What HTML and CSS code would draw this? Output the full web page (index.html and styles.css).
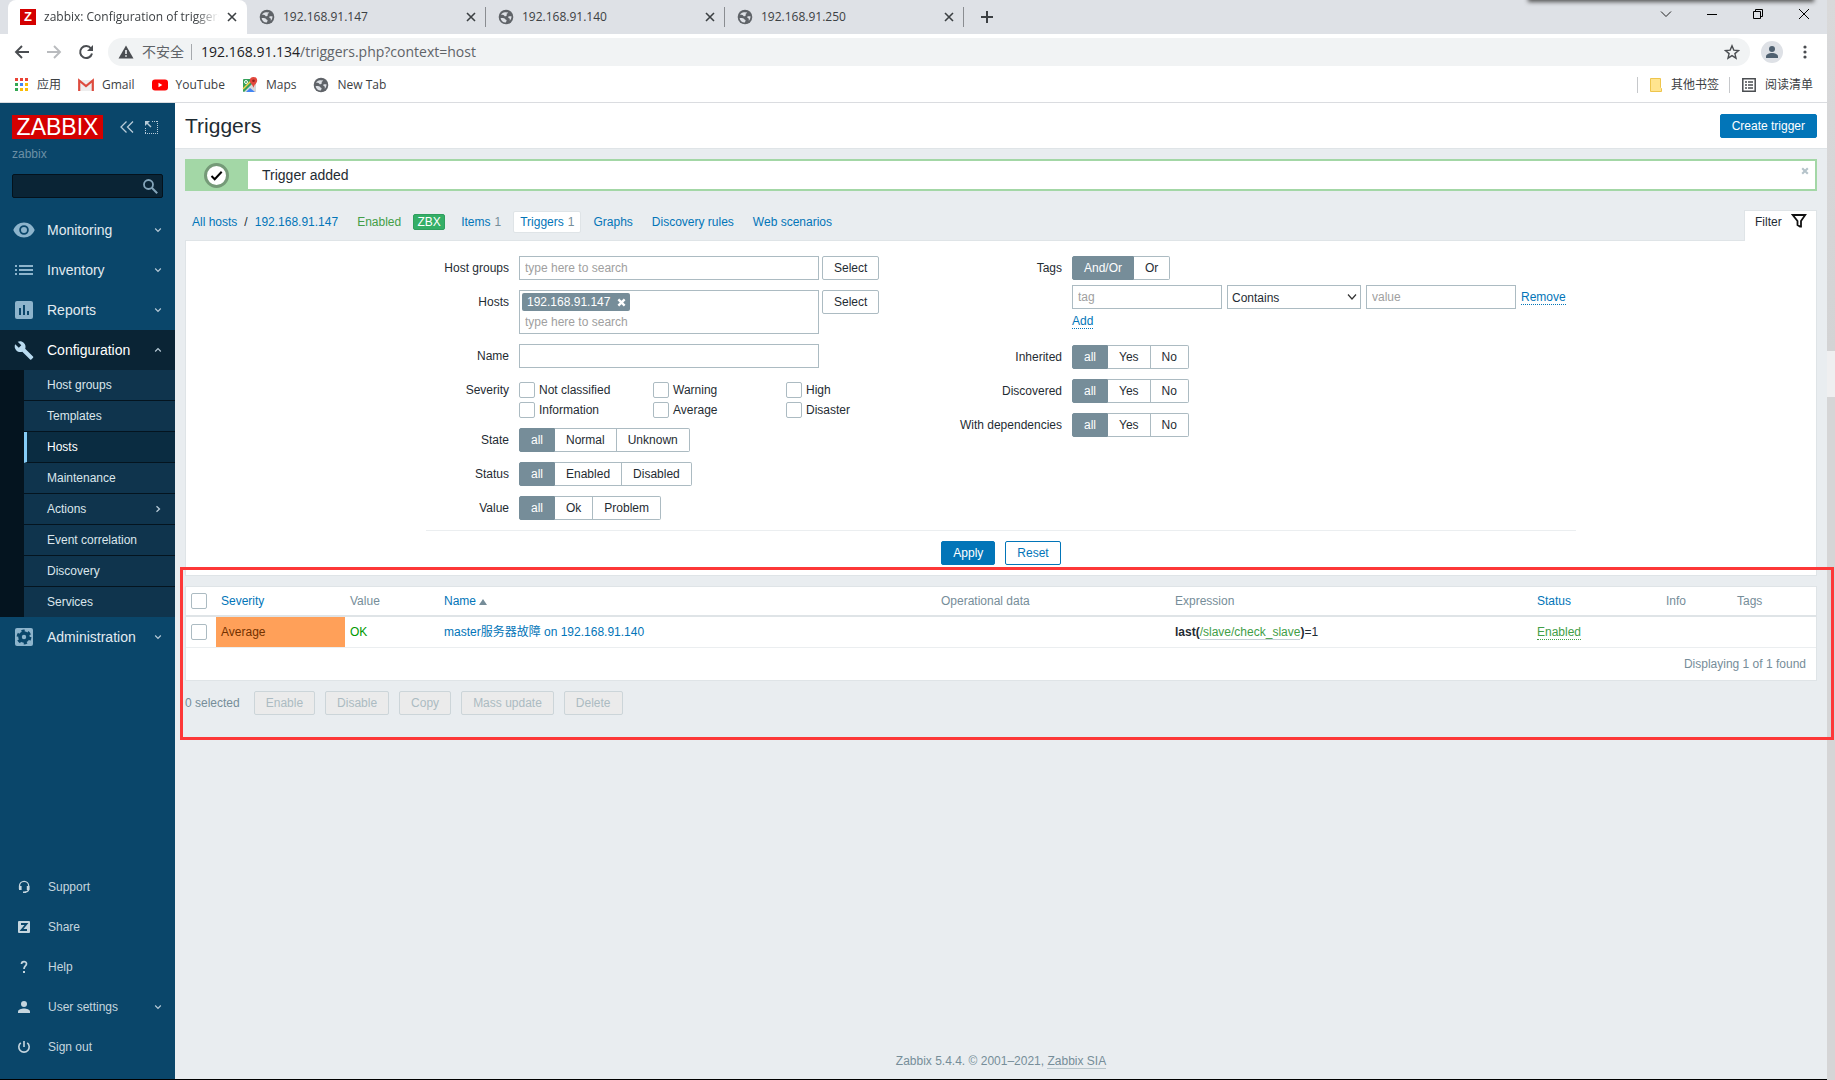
FILE: index.html
```html
<!DOCTYPE html>
<html lang="en">
<head>
<meta charset="utf-8">
<title>zabbix: Configuration of triggers</title>
<link rel="stylesheet" href="styles.css">
</head>
<body>
<svg class="defs" aria-hidden="true">
  <symbol id="i-globe" viewBox="0 0 16 16"><circle cx="8" cy="8" r="7.3" fill="#5f6368"/><path d="M7.500 3.200C5.500 3 4 4 3 5.800c1.500-.2 2.800 0 3.300 1 .5 1.100 2 .4 2.400-.3.300-.8-.3-1.300.2-1.900.4-.5 1-.4 1.300-1.200zM2.600 9c1.500-.3 4 0 4.500 1 .4.900 1.500.7 1.500 1.600 0 .8-.6 1.200-.8 2C5 13.700 2.900 11.600 2.600 9zM13.500 7.200c-1 .2-2.200-.3-3 .4-.8.800.2 1.500.8 1.700.7.300.6 1.300.4 2.400 1.200-1 1.900-2.700 1.800-4.500z" fill="#dee1e6"/></symbol>
  <symbol id="i-x" viewBox="0 0 10 10"><path d="M1 1l8 8M9 1L1 9" stroke="currentColor" stroke-width="1.600" fill="none"/></symbol>
  <symbol id="i-bold-x" viewBox="0 0 10 10"><path d="M1.500 1.500l7 7M8.500 1.500l-7 7" stroke="currentColor" stroke-width="2.600" fill="none"/></symbol>
  <symbol id="i-down" viewBox="0 0 8 8"><path d="M1.200 2.500L4 5.300l2.800-2.800" stroke="currentColor" stroke-width="1.200" fill="none"/></symbol>
  <symbol id="i-up" viewBox="0 0 8 8"><path d="M1.200 5.500L4 2.700l2.800 2.800" stroke="currentColor" stroke-width="1.200" fill="none"/></symbol>
  <symbol id="i-right" viewBox="0 0 8 8"><path d="M2.500 1.200L5.500 4l-3 2.800" stroke="currentColor" stroke-width="1.300" fill="none"/></symbol>
</svg>

<div class="window">
  <header class="browser">
    <div class="tabstrip">
      <div class="tab tab-active">
        <span class="fav-z">Z</span><span class="tab-title">zabbix: Configuration of triggers</span>
        <button class="plain" aria-label="Close tab"><svg width="10" height="10"><use href="#i-x"/></svg></button>
      </div>
      <div class="tab">
        <svg width="16" height="16"><use href="#i-globe"/></svg><span class="tab-title">192.168.91.147</span>
        <button class="plain" aria-label="Close tab"><svg width="10" height="10"><use href="#i-x"/></svg></button>
      </div>
      <div class="tab">
        <svg width="16" height="16"><use href="#i-globe"/></svg><span class="tab-title">192.168.91.140</span>
        <button class="plain" aria-label="Close tab"><svg width="10" height="10"><use href="#i-x"/></svg></button>
      </div>
      <div class="tab">
        <svg width="16" height="16"><use href="#i-globe"/></svg><span class="tab-title">192.168.91.250</span>
        <button class="plain" aria-label="Close tab"><svg width="10" height="10"><use href="#i-x"/></svg></button>
      </div>
      <button class="plain new-tab" aria-label="New tab"><svg width="12" height="12" viewBox="0 0 12 12"><path d="M6 0v12M0 6h12" stroke="#3c4043" stroke-width="2"/></svg></button>
      <div class="window-controls">
        <button class="plain" aria-label="Search tabs"><svg width="12" height="12" viewBox="0 0 12 12"><path d="M1 3.500l5 5 5-5" stroke="#222" fill="none"/></svg></button>
        <button class="plain" aria-label="Minimize"><svg width="12" height="12" viewBox="0 0 12 12"><path d="M1 6.500h10" stroke="#000"/></svg></button>
        <button class="plain" aria-label="Restore"><svg width="12" height="12" viewBox="0 0 12 12"><path d="M1.500 3.500h7v7h-7zM3.500 3.500v-2h7v7h-2" stroke="#000" fill="none"/></svg></button>
        <button class="plain" aria-label="Close"><svg width="12" height="12" viewBox="0 0 12 12"><path d="M1 1l10 10M11 1L1 11" stroke="#000" fill="none"/></svg></button>
      </div>
    </div>
    <div class="toolbar">
      <button class="plain" aria-label="Back"><svg width="16" height="16" viewBox="0 0 16 16"><path d="M15 8H2M8 2L2 8l6 6" stroke="#4a4d51" stroke-width="1.900" fill="none"/></svg></button>
      <button class="plain" aria-label="Forward"><svg width="16" height="16" viewBox="0 0 16 16"><path d="M1 8h13M8 2l6 6-6 6" stroke="#b9bbbe" stroke-width="1.900" fill="none"/></svg></button>
      <button class="plain" aria-label="Reload"><svg width="16" height="16" viewBox="0 0 16 16"><path d="M13 4.500A6 6 0 1 0 14 9.500" stroke="#4a4d51" stroke-width="2" fill="none"/><path d="M15 1v6H9z" fill="#4a4d51"/></svg></button>
      <div class="omnibox">
        <svg width="16" height="16" viewBox="0 0 16 16"><path d="M8 1.500L15.500 14.500H.5z" fill="#4a4d51"/><path d="M8 6v4M8 11.200v1.600" stroke="#f1f3f4" stroke-width="1.600"/></svg>
        <span class="unsafe">不安全</span>
        <span class="url">192.168.91.134<span>/triggers.php?context=host</span></span>
        <svg width="16" height="16" viewBox="0 0 16 16"><path d="M8 1.800l1.800 4.300 4.700.4-3.600 3.100 1.100 4.600L8 11.700l-4 2.500 1.100-4.600L1.500 6.500l4.700-.4z" stroke="#4a4d51" stroke-width="1.400" fill="none"/></svg>
      </div>
      <svg class="avatar" width="22" height="22" viewBox="0 0 22 22"><circle cx="11" cy="11" r="11" fill="#dee1e6"/><circle cx="11" cy="8" r="3" fill="#4f6070"/><path d="M5 17v-1.500c0-2 3-3.500 6-3.500s6 1.500 6 3.500V17z" fill="#4f6070"/></svg>
      <svg class="dots" width="4" height="14" viewBox="0 0 4 14"><circle cx="2" cy="2" r="1.600"/><circle cx="2" cy="7" r="1.600"/><circle cx="2" cy="12" r="1.600"/></svg>
    </div>
    <nav class="bookmarks">
      <a href="#"><svg width="14" height="14" viewBox="0 0 14 14"><path d="M0 0h3v3H0zM5 0h3v3H5zM10 0h3v3h-3z" fill="#ea4335"/><path d="M0 5h3v3H0zM0 10h3v3H0z" fill="#34a853"/><path d="M5 5h3v3H5z" fill="#4285f4"/><path d="M10 5h3v3h-3zM5 10h3v3H5zM10 10h3v3h-3z" fill="#fbbc04"/></svg>应用</a>
      <a href="#"><svg width="16" height="16" viewBox="0 0 16 16"><path d="M1 3h14v11H1z" fill="#eee"/><path d="M1.200 14V3.500L8 9l6.800-5.500V14" stroke="#dd4b3e" stroke-width="2.200" fill="none"/></svg>Gmail</a>
      <a href="#"><svg width="16" height="16" viewBox="0 0 16 16"><rect y="2.500" width="16" height="11" rx="3" fill="#f00"/><path d="M6.500 5.800v4.400L10.300 8z" fill="#fff"/></svg>YouTube</a>
      <a href="#"><svg width="16" height="16" viewBox="0 0 16 16"><rect x="1" y="2" width="13" height="13" rx="1" fill="#34a05a"/><path d="M2 15L12 5l2 2v8z" fill="#d8d8d8"/><path d="M4 15l4-4 5 4z" fill="#4285f4"/><path d="M1 12L11 2" stroke="#fbd14b" stroke-width="1.500"/><circle cx="4" cy="5" r="1.500" fill="none" stroke="#fff"/><path d="M11.500 0a3.700 3.700 0 0 1 3.700 3.700c0 2.300-2.600 3.300-3.700 7-1.100-3.700-3.700-4.700-3.700-7A3.700 3.700 0 0 1 11.500 0z" fill="#e2483d"/><circle cx="11.500" cy="3.700" r="1.300" fill="#8c2219"/></svg>Maps</a>
      <a href="#"><svg width="16" height="16"><use href="#i-globe"/></svg>New Tab</a>
      <span class="grow"></span>
      <a href="#" class="ruled"><svg width="14" height="16" viewBox="0 0 14 16"><path d="M1.500 1.500h10v9l1 1v3h-11z" fill="#ffe48f" stroke="#eec54c"/></svg>其他书签</a>
      <a href="#" class="ruled"><svg width="16" height="16" viewBox="0 0 16 16"><path d="M1.800 1.800h12.400v12.400H1.800z" fill="none" stroke="#4a4d51" stroke-width="1.500"/><path d="M4 5h2M7 5h5M4 8h2M7 8h5M4 11h2M7 11h5" stroke="#4a4d51" stroke-width="1.500"/></svg>阅读清单</a>
    </nav>
  </header>

  <div class="app">
    <aside class="sidebar">
      <div class="brand">
        <a class="logo" href="#">ZABBIX</a>
        <button class="plain" aria-label="Collapse sidebar"><svg width="14" height="12" viewBox="0 0 14 12"><path d="M6.500.5L1 6l5.500 5.500M13 .5L7.500 6l5.500 5.500" stroke="#b8cbd8" stroke-width="1.300" fill="none"/></svg></button>
        <button class="plain" aria-label="Hide sidebar"><svg width="13" height="13" viewBox="0 0 13 13"><path d="M7 .5h5.500M.5 7v5.500" stroke="#b8cbd8" stroke-dasharray="1 1" fill="none"/><path d="M12.500 0v13M0 12.500h13" stroke="#b8cbd8" stroke-dasharray="1 1" fill="none"/><path d="M6 6L2 2" stroke="#b8cbd8" stroke-width="1.500"/><path d="M0 0h5L0 5z" fill="#b8cbd8"/></svg></button>
      </div>
      <div class="server">zabbix</div>
      <form class="search">
        <input type="text" aria-label="Search">
        <button type="button" class="plain" aria-label="Search"><svg width="15" height="15" viewBox="0 0 15 15"><circle cx="5.500" cy="5.500" r="4.500" stroke="#84a5ba" stroke-width="1.800" fill="none"/><path d="M8.800 8.800l5.400 5.400" stroke="#84a5ba" stroke-width="2"/></svg></button>
      </form>
      <nav class="menu">
        <a href="#"><svg width="24" height="24" viewBox="0 0 24 24"><path d="M12 4.500C7 4.500 3 7.500 1.300 12c1.700 4.500 5.700 7.500 10.700 7.500s9-3 10.700-7.500C21 7.500 17 4.500 12 4.500zm0 12.300a4.800 4.800 0 1 1 0-9.600 4.800 4.800 0 0 1 0 9.600zm0-7.800a3 3 0 1 0 0 6 3 3 0 0 0 0-6z" fill="currentColor"/></svg><span>Monitoring</span><svg class="arrow" width="8" height="8"><use href="#i-down"/></svg></a>
        <a href="#"><svg width="24" height="24" viewBox="0 0 24 24"><path d="M3 8h2M3 12h2M3 16h2M7 8h14M7 12h14M7 16h14" stroke="currentColor" stroke-width="2"/></svg><span>Inventory</span><svg class="arrow" width="8" height="8"><use href="#i-down"/></svg></a>
        <a href="#"><svg width="24" height="24" viewBox="0 0 24 24"><rect x="3" y="3" width="18" height="18" rx="2" fill="currentColor"/><path d="M8 10v7M12 7v10M16 13v4" stroke="#0a466a" stroke-width="2"/></svg><span>Reports</span><svg class="arrow" width="8" height="8"><use href="#i-down"/></svg></a>
        <a href="#" class="open"><svg width="24" height="24" viewBox="0 0 24 24"><path d="M21 18.500l-7.800-7.700c.8-2 .3-4.300-1.300-5.900C10.200 3.200 7.700 2.900 5.700 3.800l3.600 3.500-2.500 2.500-3.600-3.500c-1 2-.5 4.500 1.200 6.200 1.600 1.600 3.900 2 5.900 1.200l7.800 7.800c.4.300.9.300 1.200 0l1.800-1.800c.3-.4.300-.9-.1-1.200z" fill="currentColor"/></svg><span>Configuration</span><svg class="arrow" width="8" height="8"><use href="#i-up"/></svg></a>
        <div class="submenu">
          <a href="#">Host groups</a>
          <a href="#">Templates</a>
          <a href="#" class="current">Hosts</a>
          <a href="#">Maintenance</a>
          <a href="#">Actions<svg class="arrow" width="8" height="8"><use href="#i-right"/></svg></a>
          <a href="#">Event correlation</a>
          <a href="#">Discovery</a>
          <a href="#">Services</a>
        </div>
        <a href="#"><svg width="24" height="24" viewBox="0 0 24 24"><rect x="3" y="3" width="18" height="18" rx="2" fill="currentColor"/><circle cx="12" cy="12" r="4" fill="none" stroke="#0a466a" stroke-width="3.600"/><circle cx="12" cy="12" r="6.200" fill="none" stroke="#0a466a" stroke-width="2.400" stroke-dasharray="3.250 3.240"/></svg><span>Administration</span><svg class="arrow" width="8" height="8"><use href="#i-down"/></svg></a>
      </nav>
      <nav class="menu menu-user">
        <a href="#"><svg width="24" height="24" viewBox="0 0 24 24"><path d="M7.500 14v-3a4.500 4.500 0 0 1 9.200 0v3c0 2-1.500 3-4.200 3.300" stroke="currentColor" stroke-width="1.300" fill="none"/><path d="M7 11h2.600v4H7zM14.800 11h2.600v4h-2.600zM11 16.500h3V18h-3z" fill="currentColor"/></svg><span>Support</span></a>
        <a href="#"><svg width="24" height="24" viewBox="0 0 24 24"><rect x="6" y="6" width="12" height="12" rx="1" fill="currentColor"/><path d="M9 9h5.500L9.500 15H15" stroke="#0a466a" stroke-width="1.800" fill="none"/></svg><span>Share</span></a>
        <a href="#"><svg width="24" height="24" viewBox="0 0 24 24"><path d="M9.500 9c0-3.200 5-3.200 5-.3 0 2.300-2.500 2.200-2.500 5.300" stroke="currentColor" stroke-width="1.700" fill="none"/><path d="M11 16h2v2h-2z" fill="currentColor"/></svg><span>Help</span></a>
        <a href="#"><svg width="24" height="24" viewBox="0 0 24 24"><circle cx="12" cy="9" r="3" fill="currentColor"/><path d="M6 18v-1.500c0-2 3.500-3 6-3s6 1 6 3V18z" fill="currentColor"/></svg><span>User settings</span><svg class="arrow" width="8" height="8"><use href="#i-down"/></svg></a>
        <a href="#"><svg width="24" height="24" viewBox="0 0 24 24"><path d="M8.800 7.800a5.200 5.200 0 1 0 6.400 0M12 6v6" stroke="currentColor" stroke-width="1.600" fill="none"/></svg><span>Sign out</span></a>
      </nav>
    </aside>

    <main>
      <div class="page-head"><h1>Triggers</h1><button class="btn btn-primary">Create trigger</button></div>
      <div class="content">
        <div class="message" role="status">
          <span class="message-icon"><svg width="25" height="25" viewBox="0 0 25 25"><circle cx="12.500" cy="12.500" r="11" fill="#fff" stroke="#759a78" stroke-width="3"/><path d="M7.500 13l3.200 3.200 7-7.500" stroke="#000" stroke-width="2" fill="none"/></svg></span>
          <span class="message-text">Trigger added</span>
          <button class="plain" aria-label="Close message"><svg width="8" height="8"><use href="#i-bold-x"/></svg></button>
        </div>

        <div class="filter-head">
          <nav class="crumbs">
            <a href="#">All hosts</a><span class="slash">/</span><a href="#">192.168.91.147</a>
            <span class="enabled">Enabled</span><span class="zbx">ZBX</span>
            <a class="link" href="#">Items<sup>1</sup></a>
            <a class="link selected" href="#">Triggers<sup>1</sup></a>
            <a class="link" href="#">Graphs</a>
            <a class="link" href="#">Discovery rules</a>
            <a class="link" href="#">Web scenarios</a>
          </nav>
          <a class="filter-tab" href="#">Filter<svg width="16" height="16" viewBox="0 0 16 16"><path d="M1.800 2h12.400L10 8v5.500H9L6.500 12V8z" stroke="#111" stroke-width="1.800" fill="none"/></svg></a>
        </div>

        <form class="filter">
          <div class="fields">
            <div class="grid grid-left">
              <label for="groups">Host groups</label>
              <div class="row"><input class="box" id="groups" type="text" placeholder="type here to search"><button type="button" class="btn">Select</button></div>
              <label for="hosts">Hosts</label>
              <div class="row">
                <div class="multi"><span class="chip">192.168.91.147<button type="button" class="plain" aria-label="Remove host"><svg width="9" height="9"><use href="#i-bold-x"/></svg></button></span><input id="hosts" type="text" placeholder="type here to search"></div>
                <button type="button" class="btn">Select</button>
              </div>
              <label for="name">Name</label>
              <div class="row"><input class="box" id="name" type="text"></div>
              <span>Severity</span>
              <div class="checks">
                <label><input type="checkbox">Not classified</label><label><input type="checkbox">Warning</label><label><input type="checkbox">High</label>
                <label><input type="checkbox">Information</label><label><input type="checkbox">Average</label><label><input type="checkbox">Disaster</label>
              </div>
              <span>State</span>
              <div class="seg"><label><input type="radio" name="state" checked>all</label><label><input type="radio" name="state">Normal</label><label><input type="radio" name="state">Unknown</label></div>
              <span>Status</span>
              <div class="seg"><label><input type="radio" name="status" checked>all</label><label><input type="radio" name="status">Enabled</label><label><input type="radio" name="status">Disabled</label></div>
              <span>Value</span>
              <div class="seg"><label><input type="radio" name="value" checked>all</label><label><input type="radio" name="value">Ok</label><label><input type="radio" name="value">Problem</label></div>
            </div>
            <div class="grid grid-right">
              <span>Tags</span>
              <div class="tags">
                <div class="seg"><label><input type="radio" name="evaltype" checked>And/Or</label><label><input type="radio" name="evaltype">Or</label></div>
                <div class="tag-row">
                  <input class="box" type="text" placeholder="tag" aria-label="Tag">
                  <span class="select"><select aria-label="Operator"><option>Contains</option></select><svg width="10" height="8" viewBox="0 0 10 8"><path d="M1 1.500l4 4.500 4-4.500" stroke="#333" stroke-width="1.200" fill="none"/></svg></span>
                  <input class="box" type="text" placeholder="value" aria-label="Value">
                  <a class="dotted" href="#">Remove</a>
                </div>
                <div class="add"><a class="dotted" href="#">Add</a></div>
              </div>
              <span>Inherited</span>
              <div class="seg"><label><input type="radio" name="inh" checked>all</label><label><input type="radio" name="inh">Yes</label><label><input type="radio" name="inh">No</label></div>
              <span>Discovered</span>
              <div class="seg"><label><input type="radio" name="disc" checked>all</label><label><input type="radio" name="disc">Yes</label><label><input type="radio" name="disc">No</label></div>
              <span>With dependencies</span>
              <div class="seg"><label><input type="radio" name="dep" checked>all</label><label><input type="radio" name="dep">Yes</label><label><input type="radio" name="dep">No</label></div>
            </div>
          </div>
          <div class="filter-actions"><button type="button" class="btn btn-primary">Apply</button><button type="button" class="btn btn-alt">Reset</button></div>
        </form>

        <section class="results">
          <div class="list">
            <table>
              <colgroup><col class="c-check"><col class="c-sev"><col class="c-val"><col><col class="c-op"><col class="c-expr"><col class="c-status"><col class="c-info"><col class="c-tags"></colgroup>
              <thead><tr><th><input type="checkbox" aria-label="Select all"></th><th><a href="#">Severity</a></th><th>Value</th><th><a href="#">Name<span class="sort"></span></a></th><th>Operational data</th><th>Expression</th><th><a href="#">Status</a></th><th>Info</th><th>Tags</th></tr></thead>
              <tbody><tr><td><input type="checkbox" aria-label="Select trigger"></td><td class="average">Average</td><td class="ok">OK</td><td><a href="#">master服务器故障 on 192.168.91.140</a></td><td></td><td><b>last(</b><a class="item" href="#">/slave/check_slave</a><b>)</b>=1</td><td><a class="dotted green" href="#">Enabled</a></td><td></td><td></td></tr></tbody>
            </table>
            <div class="stats">Displaying 1 of 1 found</div>
          </div>
          <div class="bulk"><span>0 selected</span><button class="btn" disabled>Enable</button><button class="btn" disabled>Disable</button><button class="btn" disabled>Copy</button><button class="btn" disabled>Mass update</button><button class="btn" disabled>Delete</button></div>
        </section>
      </div>
      <footer>Zabbix 5.4.4. © 2001–2021, <a href="#">Zabbix SIA</a></footer>
    </main>
  </div>
</div>
<div class="desktop"></div>
</body>
</html>
```

FILE: styles.css
```css
* { box-sizing: border-box; }

body {
  margin: 0;
  display: flex;
  min-height: 100vh;
  font: 12px/18px "Liberation Sans", "Noto Sans CJK SC", sans-serif;
  color: #1f2c33;
  background: #ebeef0;
}

a { color: #0275b8; text-decoration: none; }
svg { display: block; flex: none; }
input, select, button { font: inherit; color: inherit; margin: 0; }
.defs { position: absolute; width: 0; height: 0; }
.plain { display: flex; align-items: center; justify-content: center; padding: 0; border: 0; background: none; flex: none; }
.grow { flex: 1; }

.window { flex: 1; min-width: 0; display: flex; flex-direction: column; border-bottom: 1px solid #000; }
.desktop {
  width: 8px;
  background: linear-gradient(#d9d9da, #d3d3d4) 0 0 / 100% 351px no-repeat,
    linear-gradient(#efeff0, #efeff0) 0 351px / 100% 46px no-repeat, #d5d5d6;
}

/* Browser chrome */
.browser { background: #fff; border-bottom: 1px solid #dadce0; font-family: "Open Sans", "Noto Sans CJK SC", sans-serif; color: #3c4043; }
.tabstrip { position: relative; display: flex; height: 34px; padding-left: 8px; background: #dee1e6; }
.tabstrip::after { content: ""; position: absolute; top: -6px; right: 14px; width: 284px; height: 6px; box-shadow: 0 1px 4px 1px #555; }
.tab { position: relative; display: flex; align-items: center; width: 239px; height: 34px; padding: 0 10px 0 12px; gap: 8px; }
.tab-active { background: #fff; border-radius: 8px 8px 0 0; }
.tab:not(.tab-active)::after { content: ""; position: absolute; right: 0; top: 7px; width: 1px; height: 20px; background: #8a8d91; }
.tab-title { flex: 1; min-width: 0; overflow: hidden; white-space: nowrap; }
.tab-active .tab-title { -webkit-mask: linear-gradient(90deg, #000 86%, transparent); mask: linear-gradient(90deg, #000 86%, transparent); }
.fav-z { width: 16px; height: 16px; background: #d40000; color: #fff; font: bold 13px/16px "Liberation Sans", sans-serif; text-align: center; }
.new-tab { width: 46px; }
.window-controls { display: flex; height: 28px; margin-left: auto; }
.window-controls button { width: 46px; }

.toolbar { display: flex; align-items: center; height: 36px; padding: 0 20px 0 6px; }
.toolbar > button { width: 32px; height: 28px; }
.omnibox { display: flex; flex: 1; align-items: center; height: 28px; margin-left: 6px; padding: 0 10px; border-radius: 14px; background: #f1f3f4; font-size: 14px; }
.unsafe { margin: 0 7px 0 8px; color: #5f6368; }
.url { flex: 1; padding-left: 9px; border-left: 1px solid #a6a9ad; line-height: 16px; color: #202124; }
.url span { color: #5f6368; }
.avatar { margin: 0 20px 0 11px; }
.dots { fill: #4a4d51; }
.bookmarks { display: flex; align-items: center; height: 32px; padding: 0 14px 2px 15px; gap: 17px; }
.bookmarks a { display: flex; align-items: center; gap: 8px; color: #3c4043; }
.bookmarks .ruled { height: 16px; padding-left: 11px; border-left: 1px solid #c6c8cb; }
.bookmarks .ruled + .ruled { margin-left: -7px; }

/* Application */
.app { display: flex; flex: 1; }
.sidebar { display: flex; flex-direction: column; width: 175px; flex: none; padding-bottom: 12px; background: #0a466a; }
.brand { display: flex; align-items: center; gap: 11px; padding: 12px 17px 0 12px; }
.logo { width: 91px; height: 24px; margin-right: 6px; background: #d40000; color: #fff; font-size: 23px; line-height: 24px; text-align: center; }
.server { padding: 6px 12px 0; color: #6c90a6; }
.search { display: flex; height: 24px; margin: 11px 12px 12px; padding-right: 4px; border: 1px solid #04121c; border-radius: 2px; background: #0a2435; }
.search input { flex: 1; min-width: 0; border: 0; background: none; color: #fff; }
.menu a { display: flex; align-items: center; height: 40px; padding: 0 13px 0 12px; color: #e2ebf1; }
.menu > a { font-size: 14px; }
.menu > a > svg:first-child { color: #8db4cc; }
.menu span { flex: 1; padding-left: 11px; }
.menu .arrow { margin-left: auto; color: #b8cbd8; }
.menu .open { background: #0a2435; color: #fff; }
.menu .open > svg:first-child { color: #b9dbf0; }
.submenu { border-left: 24px solid #04141f; background: #0f344d; }
.submenu a { height: 31px; padding-left: 23px; border-bottom: 1px solid #04141f; color: #dbe6ec; }
.submenu a:last-child { height: 30px; border-bottom: 0; }
.submenu .current { padding-left: 20px; border-left: 3px solid #85cdf7; background: #0a2c41; color: #fff; }
.menu-user { margin-top: auto; }
.menu-user > a { font-size: 12px; color: #c6d6df; }
.menu-user > a > svg:first-child { color: #c6d6df; }
.menu-user span { padding-left: 12px; }

main { display: flex; flex: 1; min-width: 0; flex-direction: column; background: #e9edf0; }
.page-head { display: flex; align-items: center; justify-content: space-between; height: 46px; padding: 0 10px; border-bottom: 1px solid #dfe4e7; background: #fff; }
h1 { margin: 0; font-size: 21px; font-weight: 400; }
.content { padding: 10px; }

.btn { height: 24px; padding: 0 11px; border: 1px solid #acbbc2; border-radius: 2px; background: #fff; line-height: 22px; white-space: nowrap; }
.btn-primary { border-color: #0275b8; background: #0275b8; color: #fff; }
.btn-alt { border-color: #0275b8; color: #0275b8; }
.btn:disabled { border-color: #ccd5d9; background: #ebebeb; color: #acbbc2; }

.message { display: flex; height: 32px; border: 2px solid #a3d7a6; background: #fff; font-size: 14px; line-height: 28px; }
.message-icon { display: flex; align-items: center; justify-content: center; width: 61px; padding-right: 2px; background: #a3d7a6; }
.message-text { flex: 1; padding-left: 14px; }
.message button { width: 8px; height: 8px; margin: 6px; color: #b5c3ca; }

.filter-head { display: flex; align-items: flex-end; justify-content: space-between; height: 49px; }
.crumbs { display: flex; align-items: center; height: 22px; margin: 0 0 7px 7px; }
.slash { margin: 0 7px; }
.enabled { margin: 0 12px 0 19px; color: #429e47; }
.zbx { width: 32px; height: 16px; margin-right: 9px; border: 1px solid #2f9f5e; border-radius: 2px; background: #34af67; color: #fff; line-height: 14px; text-align: center; }
.link { height: 22px; margin-right: 5px; padding: 0 6px; border: 1px solid transparent; border-radius: 2px; line-height: 20px; }
.link sup { margin-left: 4px; font-size: 12px; vertical-align: baseline; color: #768d99; }
.selected { border-color: #dfe4e7; background: #fff; }
.filter-tab { position: relative; top: 1px; display: flex; gap: 9px; width: 73px; height: 31px; padding: 2px 9px 0 10px; border: 1px solid #dfe4e7; border-bottom: 0; background: #fff; color: #1f2c33; }

.filter { padding: 15px 10px 10px; border: 1px solid #dfe4e7; background: #fff; }
.fields { display: flex; justify-content: space-between; max-width: 1150px; margin: 0 auto; padding-bottom: 10px; border-bottom: 1px solid #ebeef0; }
.grid { display: grid; align-content: start; column-gap: 10px; row-gap: 10px; line-height: 24px; }
.grid-left { grid-template-columns: 83px 361px; }
.grid-right { grid-template-columns: 103px 504px; }
.grid > label, .grid > span { text-align: right; }
.row { display: flex; align-items: flex-start; gap: 3px; }
.box { width: 300px; height: 24px; padding: 0 5px; border: 1px solid #acbbc2; background: #fff; }
.multi { width: 300px; height: 44px; padding: 2px; border: 1px solid #acbbc2; }
.multi input { display: block; width: 100%; height: 20px; padding: 2px 3px 0; border: 0; }
.chip { display: flex; align-items: center; justify-content: space-between; width: 108px; height: 18px; padding: 0 4px 0 5px; border-radius: 2px; background: #768d99; color: #fff; line-height: 18px; }
::placeholder { color: #a0a0a0; opacity: 1; }
input[type="checkbox"] { appearance: none; display: block; width: 16px; height: 16px; border: 1px solid #acbbc2; border-radius: 2px; background: #fff; }
.checks { display: grid; grid-template-columns: 134px 133px 1fr; grid-auto-rows: 20px; height: 40px; padding-top: 2px; line-height: 20px; }
.checks label { display: flex; align-items: center; gap: 4px; }
.seg { display: flex; height: 24px; line-height: 22px; }
.seg label { position: relative; padding: 0 11px; border: 1px solid #acbbc2; border-left: 0; }
.seg label:last-child { border-radius: 0 2px 2px 0; }
.seg label:first-child { border-left: 1px solid #acbbc2; border-radius: 2px 0 0 2px; }
.seg label:has(:checked) { border-color: #768d99; background: #768d99; color: #fff; }
.seg input { position: absolute; opacity: 0; width: 0; height: 0; }
.tags { height: 79px; }
.tag-row { display: flex; gap: 5px; margin-top: 5px; }
.tag-row .box { width: 150px; }
.select { position: relative; width: 134px; }
.select select { appearance: none; display: block; width: 100%; height: 24px; padding: 0 4px; border: 1px solid #acbbc2; border-radius: 0; background: #fff; }
.select svg { position: absolute; right: 4px; top: 8px; }
.dotted { border-bottom: 1px dotted; }
.tag-row .dotted { height: 20px; line-height: 24px; }
.add { line-height: 25px; }
.filter-actions { display: flex; justify-content: center; gap: 10px; padding-top: 10px; }

/* Results, framed by a red highlight */
.results { position: relative; margin-top: 10px; }
.results::after { content: ""; position: absolute; z-index: 2; inset: -19px -17px -25px -5px; border: 3px solid #fd3838; pointer-events: none; }
.list { border: 1px solid #dfe4e7; background: #fff; }
table { width: 100%; table-layout: fixed; border-collapse: separate; border-spacing: 0; }
th, td { height: 31px; padding: 0 5px; border-bottom: 1px solid #ebeef0; text-align: left; font-weight: 400; white-space: nowrap; }
th { height: 30px; border-bottom: 2px solid #dfe4e7; color: #768d99; }
.c-check { width: 30px; }
.c-sev, .c-status { width: 129px; }
.c-val { width: 94px; }
.c-op { width: 234px; }
.c-expr { width: 362px; }
.c-info { width: 71px; }
.c-tags { width: 84px; }
.average { background: #ffa059; color: #733100; }
.ok { color: #009900; }
.item { color: #429e47; border-bottom: 1px solid #c5d0d5; }
.green { color: #429e47; }
.sort { display: inline-block; margin-left: 3px; border: 4px solid transparent; border-top: 0; border-bottom: 6px solid #768d99; }
.stats { padding: 7px 10px; color: #768d99; text-align: right; }
.bulk { display: flex; align-items: center; gap: 10px; margin-top: 10px; color: #768d99; }
.bulk span { margin-right: 4px; }

footer { margin-top: auto; padding-bottom: 9px; text-align: center; color: #768d99; }
footer a { color: #768d99; border-bottom: 1px solid #b9c6cc; }
```
